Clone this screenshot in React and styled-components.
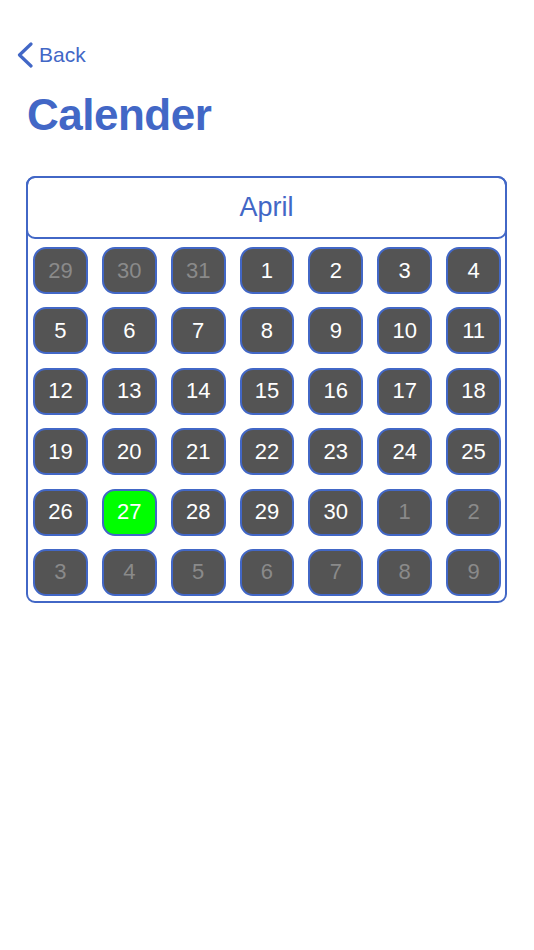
import React from 'react';
import styled, { createGlobalStyle } from 'styled-components';

const BLUE = '#4267c6';

const GlobalStyle = createGlobalStyle`
  html, body {
    margin: 0;
    padding: 0;
    background: #ffffff;
  }
  body {
    font-family: "Liberation Sans", Arial, sans-serif;
  }
`;

const Page = styled.div`
  width: 534px;
  min-height: 950px;
  box-sizing: border-box;
  padding: 33px 27px 0 26px;
`;

const NavBar = styled.div`
  display: flex;
  align-items: center;
  gap: 6px;
  height: 44px;
  margin-left: -9px;
  color: ${BLUE};
  font-size: 21px;
`;

const Title = styled.h1`
  margin: 12px 0 0 1px;
  font-size: 44px;
  line-height: 52px;
  font-weight: 700;
  letter-spacing: -0.5px;
  color: ${BLUE};
`;

const Card = styled.div`
  margin-top: 35px;
  border: 2px solid ${BLUE};
  border-radius: 9px;
`;

const MonthHeader = styled.div`
  margin: -2px -2px 0;
  height: 63px;
  box-sizing: border-box;
  border: 2px solid ${BLUE};
  border-radius: 9px;
  display: flex;
  align-items: center;
  justify-content: center;
  font-size: 27px;
  color: ${BLUE};
`;

const Grid = styled.div`
  display: grid;
  grid-template-columns: repeat(7, 1fr);
  grid-auto-rows: 47px;
  column-gap: 14px;
  row-gap: 13.4px;
  padding: 8px 4px 5px 5px;
`;

const Day = styled.div`
  box-sizing: border-box;
  border: 2px solid ${BLUE};
  border-radius: 13px;
  background: ${(p) => (p.$today ? '#00ff00' : '#545454')};
  color: ${(p) => (p.$muted ? '#8a8a8a' : '#ffffff')};
  display: flex;
  align-items: center;
  justify-content: center;
  font-size: 22px;
`;

const days = [
  ...[29, 30, 31].map((d) => ({ d, muted: true })),
  ...Array.from({ length: 30 }, (_, i) => ({ d: i + 1 })),
  ...[1, 2, 3, 4, 5, 6, 7, 8, 9].map((d) => ({ d, muted: true })),
];

export default function App() {
  return (
    <>
      <GlobalStyle />
      <Page>
        <NavBar>
          <svg width="16" height="26" viewBox="0 0 16 26">
            <polyline
              points="14,2 2.5,13 14,24"
              fill="none"
              stroke={BLUE}
              strokeWidth="3.2"
              strokeLinecap="round"
              strokeLinejoin="round"
            />
          </svg>
          <span>Back</span>
        </NavBar>
        <Title>Calender</Title>
        <Card>
          <MonthHeader>April</MonthHeader>
          <Grid>
            {days.map((day, i) => (
              <Day key={i} $muted={day.muted} $today={!day.muted && day.d === 27}>
                {day.d}
              </Day>
            ))}
          </Grid>
        </Card>
      </Page>
    </>
  );
}
